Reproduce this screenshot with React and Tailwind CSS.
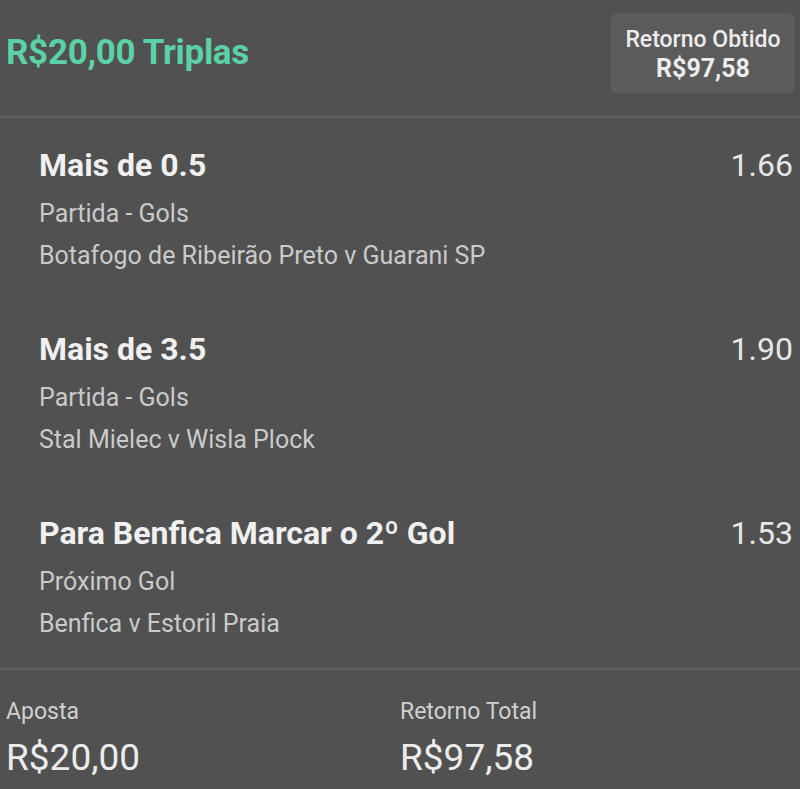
export default function App() {
  const items = [
    { t: "Mais de 0.5", m: "Partida - Gols", e: "Botafogo de Ribeirão Preto v Guarani SP", o: "1.66" },
    { t: "Mais de 3.5", m: "Partida - Gols", e: "Stal Mielec v Wisla Plock", o: "1.90" },
    { t: "Para Benfica Marcar o 2º Gol", m: "Próximo Gol", e: "Benfica v Estoril Praia", o: "1.53" },
  ];
  return (
    <div className="w-[800px] h-[789px] bg-[#515151] overflow-hidden font-['Roboto',sans-serif]">
      <div className="h-[116px] flex items-start justify-between pl-[6px] pr-[5px] pt-[13px]">
        <div className="mt-[17px] text-[35px] leading-[46px] font-bold text-[#5ad2a5] tracking-[-0.3px]">
          R$20,00 Triplas
        </div>
        <div className="w-[184px] h-[80px] bg-[#5b5b5b] rounded-[6px] flex flex-col items-center justify-center text-[#ececec] pt-[3px]">
          <div className="text-[23px] leading-[28px] font-medium">Retorno Obtido</div>
          <div className="text-[25px] leading-[30px] font-bold">R$97,58</div>
        </div>
      </div>
      <div className="h-[2px] bg-[#5c5c5c]" />
      <div className="flex flex-col pl-[39px] pr-[7px] pt-[27px]">
        {items.map((it, i) => (
          <div key={i} className={`flex justify-between ${i < 2 ? "h-[184px]" : ""}`}>
            <div className="flex flex-col">
              <div className="text-[32px] leading-[40px] font-bold text-[#f0f0f0]">{it.t}</div>
              <div className="mt-[11px] text-[25px] leading-[36px] text-[#cacaca]">{it.m}</div>
              <div className="mt-[6px] text-[25px] leading-[36px] text-[#cacaca]">{it.e}</div>
            </div>
            <div className="text-[32px] leading-[40px] text-[#e6e6e6]">{it.o}</div>
          </div>
        ))}
      </div>
      <div className="h-[2px] bg-[#5c5c5c] mt-[26px]" />
      <div className="flex pl-[6px] pt-[28px]">
        <div className="w-[394px] flex flex-col">
          <div className="text-[23px] leading-[28px] text-[#d0d0d0]">Aposta</div>
          <div className="mt-[10px] text-[37px] leading-[44px] text-[#ececec]">R$20,00</div>
        </div>
        <div className="flex flex-col">
          <div className="text-[23px] leading-[28px] text-[#d0d0d0]">Retorno Total</div>
          <div className="mt-[10px] text-[37px] leading-[44px] text-[#ececec]">R$97,58</div>
        </div>
      </div>
    </div>
  );
}
